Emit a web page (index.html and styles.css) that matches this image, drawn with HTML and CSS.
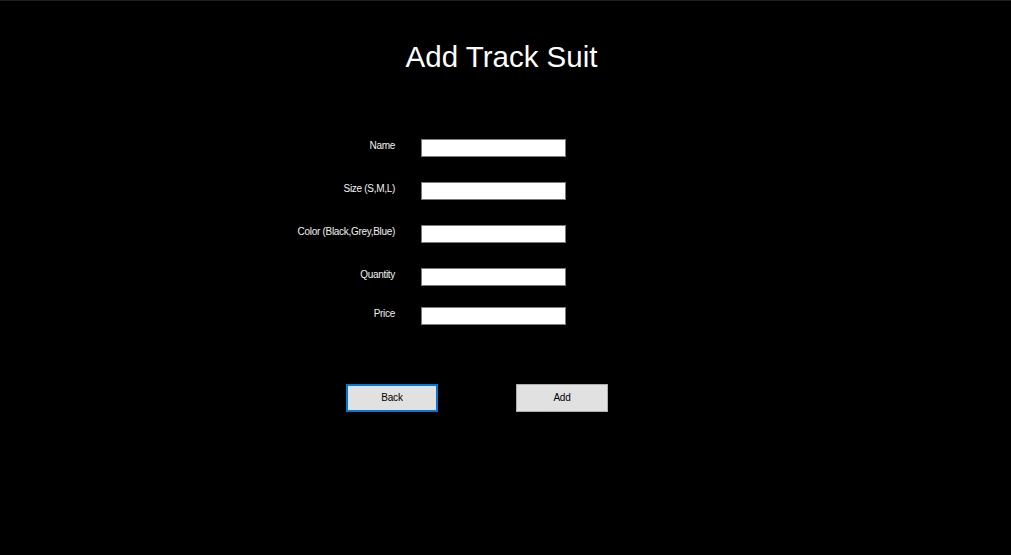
FILE: index.html
```html
<!DOCTYPE html>
<html lang="en">
<head>
<meta charset="utf-8">
<title>Add Track Suit</title>
<link rel="stylesheet" href="styles.css">
</head>
<body>
<main class="window">
  <h1 class="title">Add Track Suit</h1>
  <form class="form">
    <div class="field">
      <label class="label" for="name">Name</label>
      <input class="input" id="name" type="text">
    </div>
    <div class="field">
      <label class="label" for="size">Size (S,M,L)</label>
      <input class="input" id="size" type="text">
    </div>
    <div class="field">
      <label class="label" for="color">Color (Black,Grey,Blue)</label>
      <input class="input" id="color" type="text">
    </div>
    <div class="field">
      <label class="label" for="qty">Quantity</label>
      <input class="input" id="qty" type="text">
    </div>
    <div class="field field-last">
      <label class="label" for="price">Price</label>
      <input class="input" id="price" type="text">
    </div>
  </form>
  <div class="actions">
    <button class="btn btn-focus" type="button">Back</button>
    <button class="btn" type="button">Add</button>
  </div>
</main>
</body>
</html>
```

FILE: styles.css
```css
html, body {
  margin: 0;
  padding: 0;
  background: #000;
}

.window {
  box-sizing: border-box;
  height: 555px;
  border-top: 1px solid #1e1e1e;
  padding-top: 39px;
  background: #000;
  font-family: "Liberation Sans", Arial, sans-serif;
  color: #fff;
}

.title {
  margin: 0;
  padding-right: 8px;
  text-align: center;
  font-size: 29.5px;
  line-height: 34px;
  font-weight: normal;
  color: #fff;
}

.form {
  margin: 65px 0 0 275px;
  display: flex;
  flex-direction: column;
  gap: 25px;
}

.field {
  display: flex;
  align-items: flex-start;
}

.field-last {
  margin-top: -4px;
}

.label {
  width: 120px;
  text-align: right;
  font-size: 10px;
  letter-spacing: -0.3px;
  line-height: 13px;
  padding-top: 0;
  color: #f2f2f2;
  white-space: nowrap;
}

.input {
  box-sizing: border-box;
  margin: 0 0 0 26px;
  width: 145px;
  height: 18px;
  padding: 0 2px;
  border: 1px solid #7a7a7a;
  background: #fff;
  outline: none;
  font-family: inherit;
  font-size: 11px;
}

.actions {
  margin: 59px 0 0 346px;
  display: flex;
  gap: 78px;
}

.btn {
  box-sizing: border-box;
  width: 92px;
  height: 28px;
  padding: 0;
  border: 1px solid #adadad;
  background: #e1e1e1;
  color: #000;
  font-family: inherit;
  font-size: 10px;
  letter-spacing: -0.2px;
  line-height: 1;
}

.btn-focus {
  border: 2px solid #0078d7;
}
```
